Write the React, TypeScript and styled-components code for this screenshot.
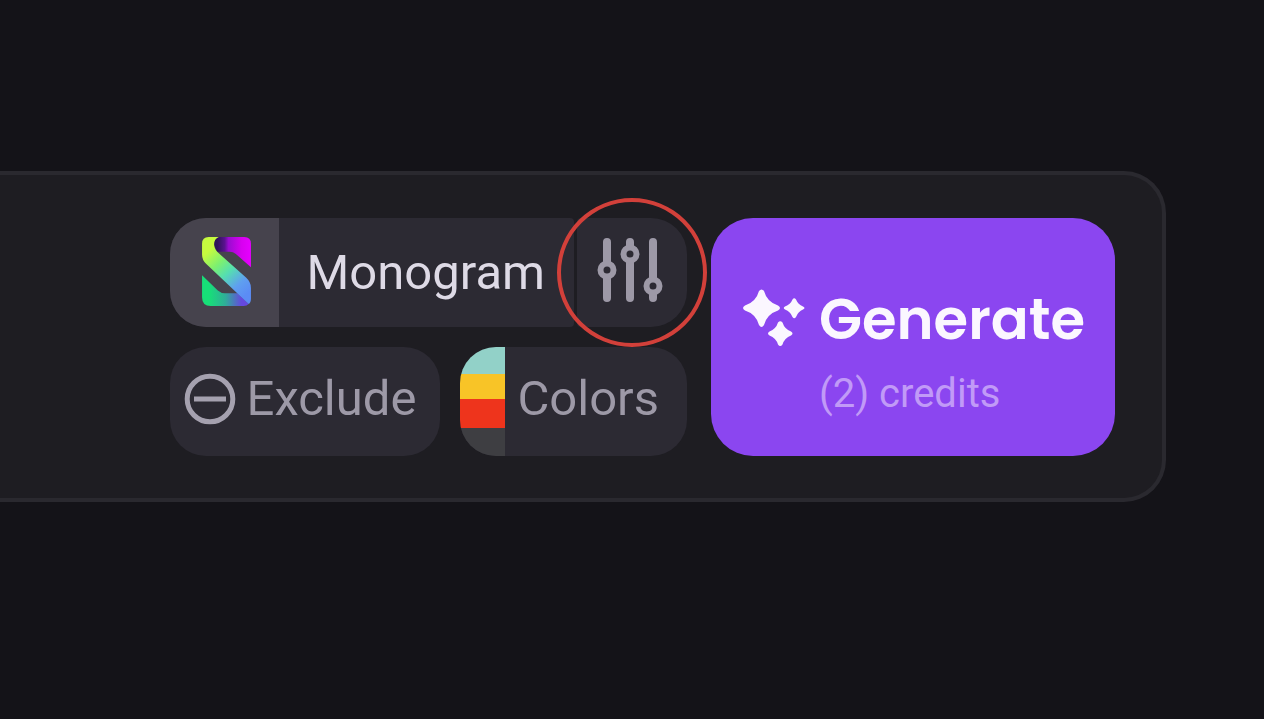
import React from "react";
import styled, { createGlobalStyle } from "styled-components";

const GlobalStyle = createGlobalStyle`
  * { box-sizing: border-box; }
  html, body, #root { min-height: 100%; }
  body {
    margin: 0;
    background: #141318;
    font-family: Roboto, "Liberation Sans", sans-serif;
    overflow-x: hidden;
  }
  button { font: inherit; border: 0; margin: 0; cursor: pointer; }
  svg { display: block; flex: none; }
`;

const Page = styled.main`
  padding: 171px 98px 0 0;
`;

const PromptBar = styled.section`
  display: flex;
  justify-content: flex-end;
  gap: 24px;
  padding: 43px 47px 42px 24px;
  background: #1e1d22;
  border: 4px solid #2a292f;
  border-left: 0;
  border-radius: 0 42px 42px 0;
`;

const Options = styled.div`
  display: flex;
  flex-direction: column;
  gap: 20px;
`;

const Row = styled.div<{ $gap: number }>`
  display: flex;
  gap: ${(p) => p.$gap}px;
`;

const Chip = styled.button<{ $radius: string; $tone?: string }>`
  display: flex;
  align-items: center;
  height: 109px;
  padding: 0;
  overflow: hidden;
  border-radius: ${(p) => p.$radius};
  background: #2c2a33;
  color: ${(p) => p.$tone ?? "#9d99a7"};
  font-size: 49px;
  line-height: 56px;
`;

const StyleChip = styled(Chip)`
  flex: 1;
`;

const Thumb = styled.span`
  display: flex;
  align-items: center;
  justify-content: center;
  width: 109px;
  height: 100%;
  padding: 0 0 2px 4px;
  background: #46434d;
`;

const StyleName = styled.span`
  flex: 1;
  padding: 0 20px 0 28px;
  text-align: left;
`;

const SettingsSlot = styled.div`
  position: relative;
`;

const SettingsButton = styled(Chip)`
  width: 110px;
  justify-content: center;
  padding: 0 4px 6px 0;
`;

const Ring = styled.span`
  position: absolute;
  inset: -20px;
  border: 4px solid #d2403a;
  border-radius: 50%;
  pointer-events: none;
`;

const ExcludeChip = styled(Chip)`
  flex: 1;
  gap: 11px;
  padding: 0 24px 6px 14px;
`;

const ColorsChip = styled(Chip)`
  gap: 12px;
  padding-right: 28px;
`;

const ChipText = styled.span`
  padding-bottom: 6px;
`;

const Palette = styled.span`
  display: grid;
  grid-template-rows: 27px 25px 29px 1fr;
  width: 45px;
  height: 100%;
`;

const Swatch = styled.span<{ $color: string }>`
  background: ${(p) => p.$color};
`;

const GenerateButton = styled.button`
  display: grid;
  grid-template-columns: auto 1fr;
  align-content: center;
  align-items: center;
  column-gap: 14px;
  row-gap: 18px;
  width: 404px;
  padding: 40px 24px 8px 32px;
  border-radius: 42px;
  background: #8b46f0;
  color: #fbf7ff;
  text-align: left;
`;

const GenerateText = styled.span`
  font-family: Poppins, Inter, sans-serif;
  font-size: 56px;
  line-height: 64px;
  font-weight: 600;
`;

const Credits = styled.span`
  grid-column: 2;
  color: #c19af7;
  font-size: 40px;
  line-height: 48px;
`;

const MonogramLogo = () => (
  <svg width="49" height="69" viewBox="0 0 146 206" aria-hidden="true">
    <defs>
      <linearGradient id="fold" x1="0" x2="1" y1="0" y2="0">
        <stop offset="0.1" stopColor="#2d1459" />
        <stop offset="0.3" stopColor="#5a1290" />
        <stop offset="0.4" stopColor="#9a0cd0" />
        <stop offset="0.75" stopColor="#d800f0" />
        <stop offset="1" stopColor="#e600ff" />
      </linearGradient>
      <linearGradient id="band" gradientUnits="userSpaceOnUse" x1="10" y1="25" x2="140" y2="165">
        <stop offset="0.1" stopColor="#c6fb3f" />
        <stop offset="0.35" stopColor="#7df070" />
        <stop offset="0.55" stopColor="#55dfb0" />
        <stop offset="0.8" stopColor="#5f9ff0" />
        <stop offset="1" stopColor="#5b8cf5" />
      </linearGradient>
      <linearGradient id="base" x1="0" x2="1" y1="0" y2="0">
        <stop offset="0.15" stopColor="#17df78" />
        <stop offset="0.5" stopColor="#2fae98" />
        <stop offset="0.85" stopColor="#6548df" />
      </linearGradient>
    </defs>
    <path fill="url(#fold)" d="M40 0H126Q146 0 146 20V90L101 51Q93 44 82 44H45L34 20Z" />
    <path fill="url(#base)" d="M0 114L47 160Q56 168 68 168H106L139 200Q134 206 124 206H26Q0 206 0 180Z" />
    <path fill="url(#band)" d="M0 20Q0 0 20 0H50Q36 6 36 22Q36 35 46 45L132 122Q146 135 146 152V184Q146 196 139 200L12 80Q0 68 0 52Z" />
  </svg>
);

const SlidersIcon = () => (
  <svg width="66" height="66" viewBox="0 0 66 66" fill="none" stroke="#9d99a7" strokeLinecap="round" aria-hidden="true">
    <path strokeWidth="8" d="M10 5V61M33 5V61M56 5V61" />
    <g fill="#2c2a33" strokeWidth="6">
      <circle cx="10" cy="33" r="6.5" />
      <circle cx="33" cy="17" r="6.5" />
      <circle cx="56" cy="49" r="6.5" />
    </g>
  </svg>
);

const ExcludeIcon = () => (
  <svg width="52" height="52" viewBox="0 0 52 52" fill="none" stroke="#a5a1af" strokeWidth="5" aria-hidden="true">
    <circle cx="26" cy="26" r="22.8" />
    <path d="M10 26H42" />
  </svg>
);

const SparklesIcon = () => (
  <svg width="62" height="62" viewBox="0 0 62 62" fill="#fbf7ff" aria-hidden="true">
    <path d="M16 2Q18.500 -1 21 2Q24 13 35 16.500Q39 19 35 21.500Q24 25 21 36Q18.500 40 16 36Q13 25 2 21.500Q-2 19 2 16.500Q13 13 16 2Z" />
    <path d="M49.500 10.500Q51.200 8 53 10.500Q55 15.500 60 17.500Q63 19 60 20.500Q55 22.500 53 28Q51.200 30.500 49.500 28Q47.500 22.500 42 20.500Q39.500 19 42 17.500Q47.500 15.500 49.500 10.500Z" />
    <path d="M35 33.500Q37.200 31 39.500 33.500Q41.500 40 48 42.500Q51 44.500 48 46.500Q41.500 49 39.500 55.500Q37.200 58.500 35 55.500Q33 49 26.500 46.500Q23.500 44.500 26.500 42.500Q33 40 35 33.500Z" />
  </svg>
);

const paletteColors = ["#92d1c8", "#f8c427", "#ee341c", "#3e3e42"];

export default function App() {
  return (
    <>
      <GlobalStyle />
      <Page>
        <PromptBar aria-label="Generation options">
          <Options>
            <Row $gap={3}>
              <StyleChip type="button" $radius="36px 4px 4px 36px" $tone="#dedae6">
                <Thumb>
                  <MonogramLogo />
                </Thumb>
                <StyleName>Monogram</StyleName>
              </StyleChip>
              <SettingsSlot>
                <SettingsButton type="button" aria-label="Style settings" $radius="4px 36px 36px 4px">
                  <SlidersIcon />
                </SettingsButton>
                <Ring />
              </SettingsSlot>
            </Row>
            <Row $gap={20}>
              <ExcludeChip type="button" $radius="36px">
                <ExcludeIcon />
                <span>Exclude</span>
              </ExcludeChip>
              <ColorsChip type="button" $radius="36px">
                <Palette>
                  {paletteColors.map((color) => (
                    <Swatch key={color} $color={color} />
                  ))}
                </Palette>
                <ChipText>Colors</ChipText>
              </ColorsChip>
            </Row>
          </Options>
          <GenerateButton type="button">
            <SparklesIcon />
            <GenerateText>Generate</GenerateText>
            <Credits>(2) credits</Credits>
          </GenerateButton>
        </PromptBar>
      </Page>
    </>
  );
}
